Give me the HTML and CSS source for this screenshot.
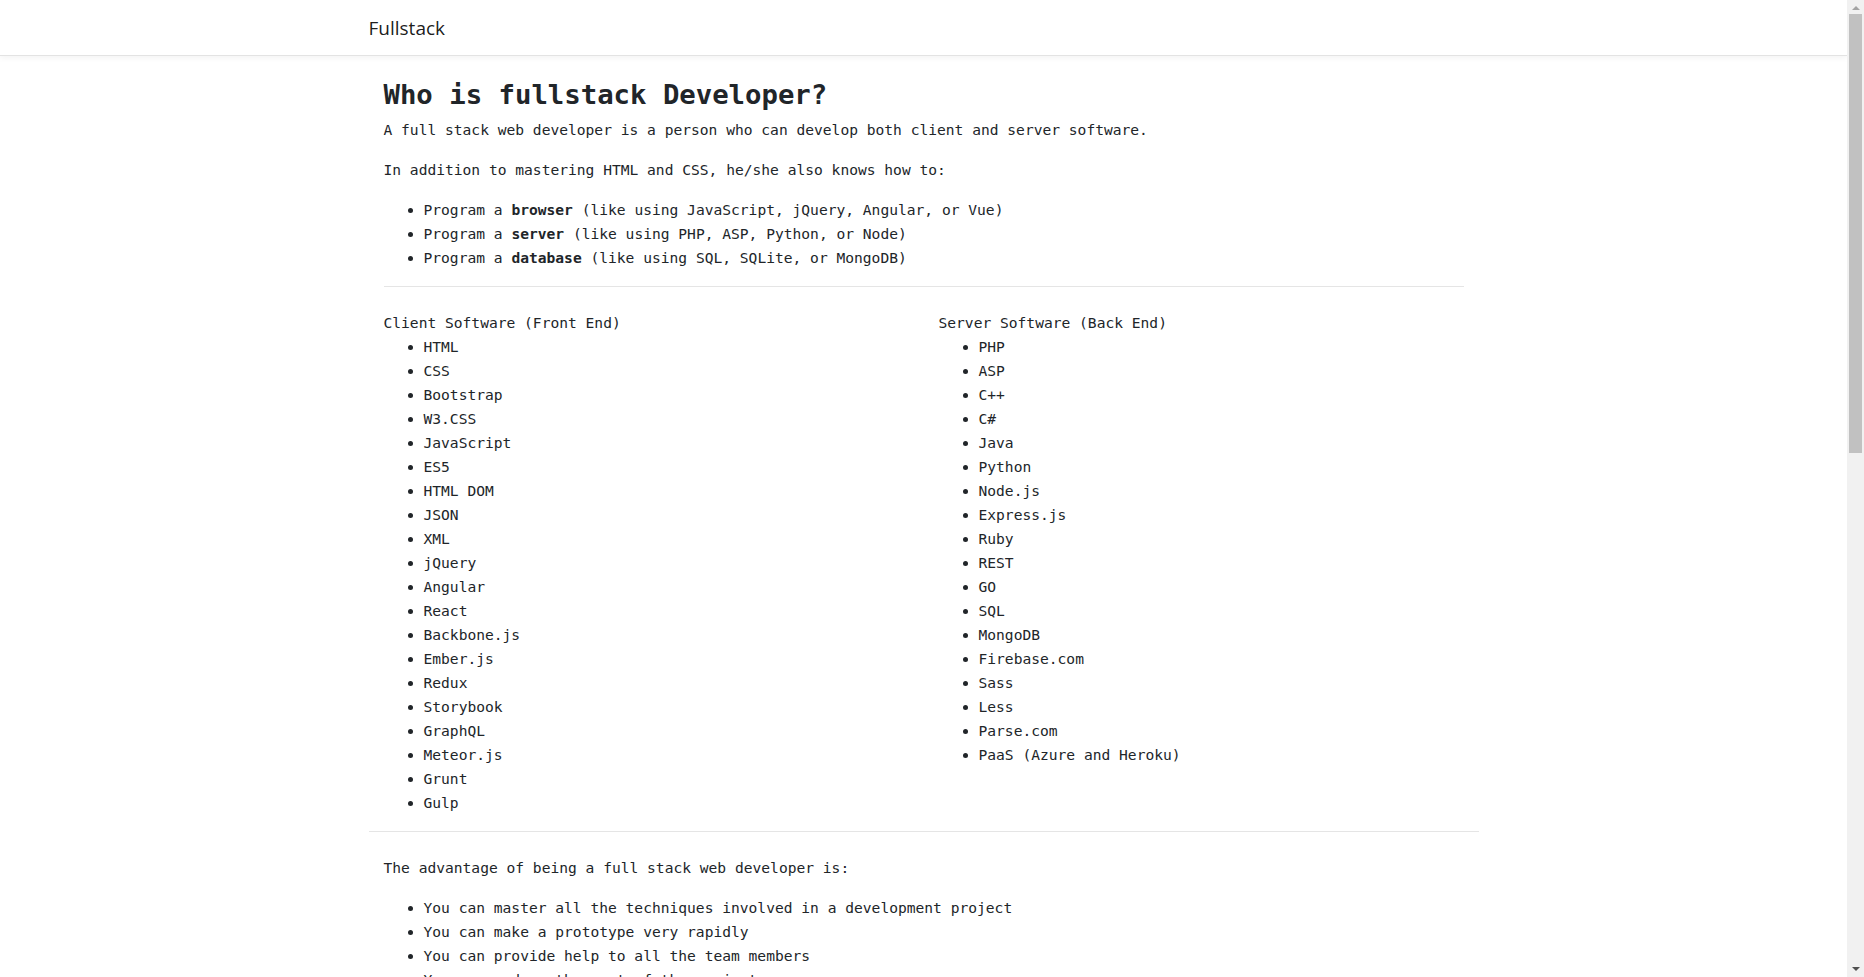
FILE: index.html
```html
<!DOCTYPE html>
<html lang="en">
<head>
<meta charset="utf-8">
<title>Fullstack</title>
<link rel="stylesheet" href="styles.css">
</head>
<body>
<nav class="navbar">
  <div class="container">
    <a class="brand" href="#">Fullstack</a>
  </div>
</nav>
<main class="container">
  <section class="intro">
    <h1 class="title">Who is fullstack Developer?</h1>
    <p>A full stack web developer is a person who can develop both client and server software.</p>
    <p>In addition to mastering HTML and CSS, he/she also knows how to:</p>
    <ul>
      <li>Program a <b>browser</b> (like using JavaScript, jQuery, Angular, or Vue)</li>
      <li>Program a <b>server</b> (like using PHP, ASP, Python, or Node)</li>
      <li>Program a <b>database</b> (like using SQL, SQLite, or MongoDB)</li>
    </ul>
    <hr class="rule">
  </section>
  <section class="stack">
    <div class="col">
      <p class="col-title">Client Software (Front End)</p>
      <ul>
        <li>HTML</li>
        <li>CSS</li>
        <li>Bootstrap</li>
        <li>W3.CSS</li>
        <li>JavaScript</li>
        <li>ES5</li>
        <li>HTML DOM</li>
        <li>JSON</li>
        <li>XML</li>
        <li>jQuery</li>
        <li>Angular</li>
        <li>React</li>
        <li>Backbone.js</li>
        <li>Ember.js</li>
        <li>Redux</li>
        <li>Storybook</li>
        <li>GraphQL</li>
        <li>Meteor.js</li>
        <li>Grunt</li>
        <li>Gulp</li>
      </ul>
    </div>
    <div class="col">
      <p class="col-title">Server Software (Back End)</p>
      <ul>
        <li>PHP</li>
        <li>ASP</li>
        <li>C++</li>
        <li>C#</li>
        <li>Java</li>
        <li>Python</li>
        <li>Node.js</li>
        <li>Express.js</li>
        <li>Ruby</li>
        <li>REST</li>
        <li>GO</li>
        <li>SQL</li>
        <li>MongoDB</li>
        <li>Firebase.com</li>
        <li>Sass</li>
        <li>Less</li>
        <li>Parse.com</li>
        <li>PaaS (Azure and Heroku)</li>
      </ul>
    </div>
  </section>
  <hr class="rule">
  <section class="advantage">
    <p>The advantage of being a full stack web developer is:</p>
    <ul>
      <li>You can master all the techniques involved in a development project</li>
      <li>You can make a prototype very rapidly</li>
      <li>You can provide help to all the team members</li>
      <li>You can reduce the cost of the project</li>
      <li>You can reduce the time used for team communication</li>
      <li>You can switch between front and back end development based on requirements</li>
      <li>You can better understand all aspects of new and upcoming technologies</li>
    </ul>
  </section>
</main>
<div class="scrollbar" aria-hidden="true">
  <span class="arrow up"></span>
  <span class="thumb"></span>
  <span class="arrow down"></span>
</div>
</body>
</html>
```
FILE: styles.css
```css
html, body {
  margin: 0;
  padding: 0;
}

body {
  font-family: "DejaVu Sans Mono", "Liberation Mono", monospace;
  font-size: 14.6px;
  line-height: 24px;
  color: #212529;
  background: #fff;
  padding-right: 17px;
}

.container {
  width: 1110px;
  margin: 0 auto;
}

.navbar {
  height: 56px;
  box-sizing: border-box;
  border-bottom: 1px solid #e3e3e3;
  box-shadow: 0 2px 6px rgba(0, 0, 0, 0.05);
  background: #fff;
}

.navbar .container {
  height: 55px;
  display: flex;
  align-items: center;
}

.brand {
  font-family: "Open Sans", "Noto Sans", sans-serif;
  font-size: 19px;
  color: rgba(0, 0, 0, 0.9);
  text-decoration: none;
  line-height: 30px;
  margin-top: 0;
}

main.container {
  padding-top: 23px;
}

.intro {
  padding: 0 15px;
}

.title {
  font-size: 27.3px;
  line-height: 1.2;
  font-weight: bold;
  margin: 0 0 6px;
}

p {
  margin: 0 0 16px;
}

ul {
  margin: 0 0 16px;
  padding-left: 40px;
}

b {
  font-weight: bold;
}

.rule {
  border: 0;
  border-top: 1px solid rgba(0, 0, 0, 0.1);
  margin: 16px 0;
  height: 0;
}

.stack {
  display: flex;
  padding-top: 8px;
}

.stack .col {
  flex: 1 1 0;
  padding: 0 15px;
}

.stack .col ul {
  margin-bottom: 0;
}

.col-title {
  margin: 0;
}

.advantage {
  padding: 8px 15px 0;
}

.scrollbar {
  position: fixed;
  top: 0;
  right: 0;
  width: 17px;
  height: 100vh;
  background: #f1f1f1;
  display: flex;
  flex-direction: column;
  align-items: center;
}

.scrollbar .arrow {
  width: 0;
  height: 0;
  border-left: 4px solid transparent;
  border-right: 4px solid transparent;
  flex: 0 0 auto;
}

.scrollbar .arrow.up {
  border-bottom: 4px solid #a3a3a3;
  margin: 6px 0 4px;
}

.scrollbar .arrow.down {
  border-top: 4px solid #505050;
  margin-top: auto;
  margin-bottom: 6px;
}

.scrollbar .thumb {
  width: 13px;
  height: 439px;
  background: #c1c1c1;
}
```
